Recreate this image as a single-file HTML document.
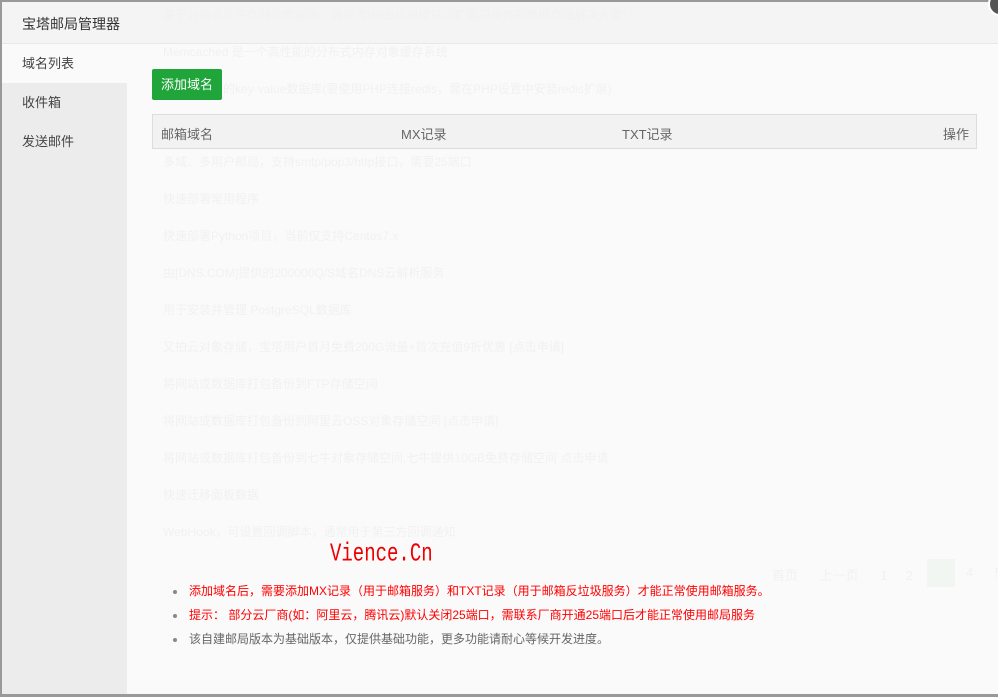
<!DOCTYPE html>
<html><head><meta charset="utf-8">
<style>
*{margin:0;padding:0;box-sizing:border-box}
body{width:998px;height:697px;background:#999;font-family:"Liberation Sans","Noto Sans CJK SC",sans-serif;font-size:12px;position:relative;overflow:hidden}
.modal{position:absolute;left:2px;top:2px;width:996px;height:692px;background:#fafafa;overflow:visible}
.hdr{position:absolute;left:0;top:0;width:100%;height:42px;background:#f4f4f4;border-bottom:1px solid #e8e8e8;font-size:14px;color:#333;padding:12px 0 0 20px}
.side{position:absolute;left:0;top:42px;width:125px;height:650px;background:#ececec}
.side div{height:39px;line-height:39px;padding-left:20px;font-size:13px;color:#444}
.side .on{background:#fafafa}
.bg{position:absolute;color:#f1f1f1;font-size:12px;white-space:nowrap}
.btn{position:absolute;left:150px;top:67px;width:70px;height:31px;background:#20a53a;color:#fff;border-radius:2px;font-size:13px;line-height:31px;text-align:center}
.th{position:absolute;left:150px;top:112px;width:825px;height:35px;background:#f2f2f2;border:1px solid #ddd;color:#666;font-size:13px}
.th span{position:absolute;top:9px}
ul{position:absolute;left:171px;top:580px;list-style:none}
li{height:24px;font-size:12px;position:relative;padding-left:16px}
li:before{content:"";position:absolute;left:0;top:8px;width:4px;height:4px;border-radius:2px;background:#888}
.close{position:absolute;left:986px;top:-10px;width:24px;height:24px;border-radius:12px;background:#555;border:2px solid #fff}
</style></head><body>
<div class="modal">
<div class="hdr">宝塔邮局管理器</div>
<div class="side"><div class="on">域名列表</div><div>收件箱</div><div>发送邮件</div></div>
<div class="bg" style="left:161px;top:4px">基于分布式文件存储的数据库，旨在为WEB应用提供可扩展的高性能数据存储解决方案!</div>
<div class="bg" style="left:161px;top:41px">Memcached 是一个高性能的分布式内存对象缓存系统</div>
<div class="bg" style="left:161px;top:78px">一个高性能的key-value数据库(要使用PHP连接redis，需在PHP设置中安装redis扩展)</div>
<div class="bg" style="left:161px;top:151px">多域、多用户邮局，支持smtp/pop3/http接口，需要25端口</div>
<div class="bg" style="left:161px;top:188px">快速部署常用程序</div>
<div class="bg" style="left:161px;top:225px">快速部署Python项目，当前仅支持Centos7.x</div>
<div class="bg" style="left:161px;top:262px">由[DNS.COM]提供的200000Q/S域名DNS云解析服务</div>
<div class="bg" style="left:161px;top:299px">用于安装并管理 PostgreSQL数据库</div>
<div class="bg" style="left:161px;top:336px">又拍云对象存储，宝塔用户首月免费200G流量+首次充值9折优惠 [点击申请]</div>
<div class="bg" style="left:161px;top:373px">将网站或数据库打包备份到FTP存储空间</div>
<div class="bg" style="left:161px;top:410px">将网站或数据库打包备份到阿里云OSS对象存储空间 [点击申请]</div>
<div class="bg" style="left:161px;top:447px">将网站或数据库打包备份到七牛对象存储空间,七牛提供10GB免费存储空间 点击申请</div>
<div class="bg" style="left:161px;top:484px">快速迁移面板数据</div>
<div class="bg" style="left:161px;top:521px">WebHook，可设置回调脚本，通常用于第三方回调通知</div>
<div class="bg" style="left:770px;top:563px;font-size:13px">首页 &nbsp;&nbsp;&nbsp;&nbsp; 上一页 &nbsp;&nbsp;&nbsp;&nbsp; 1 &nbsp;&nbsp;&nbsp; 2</div>
<div style="position:absolute;left:925px;top:557px;width:28px;height:28px;background:#f2f6f2"></div>
<div class="bg" style="left:964px;top:563px;font-size:13px">4 &nbsp;&nbsp;&nbsp;&nbsp; 5</div>
<div class="btn">添加域名</div>
<div class="th"><span style="left:8px">邮箱域名</span><span style="left:248px">MX记录</span><span style="left:469px">TXT记录</span><span style="left:790px">操作</span></div>
<div style="position:absolute;left:328px;top:537px;font-family:'Liberation Mono',monospace;font-size:19px;color:#e00;transform:scaleY(1.35);transform-origin:left top">Vience.Cn</div>
<ul>
<li style="color:#f00">添加域名后，需要添加MX记录（用于邮箱服务）和TXT记录（用于邮箱反垃圾服务）才能正常使用邮箱服务。</li>
<li style="color:#f00">提示： 部分云厂商(如：阿里云，腾讯云)默认关闭25端口，需联系厂商开通25端口后才能正常使用邮局服务</li>
<li style="color:#666">该自建邮局版本为基础版本，仅提供基础功能，更多功能请耐心等候开发进度。</li>
</ul>
<div class="close"></div>
</div>
</body></html>
